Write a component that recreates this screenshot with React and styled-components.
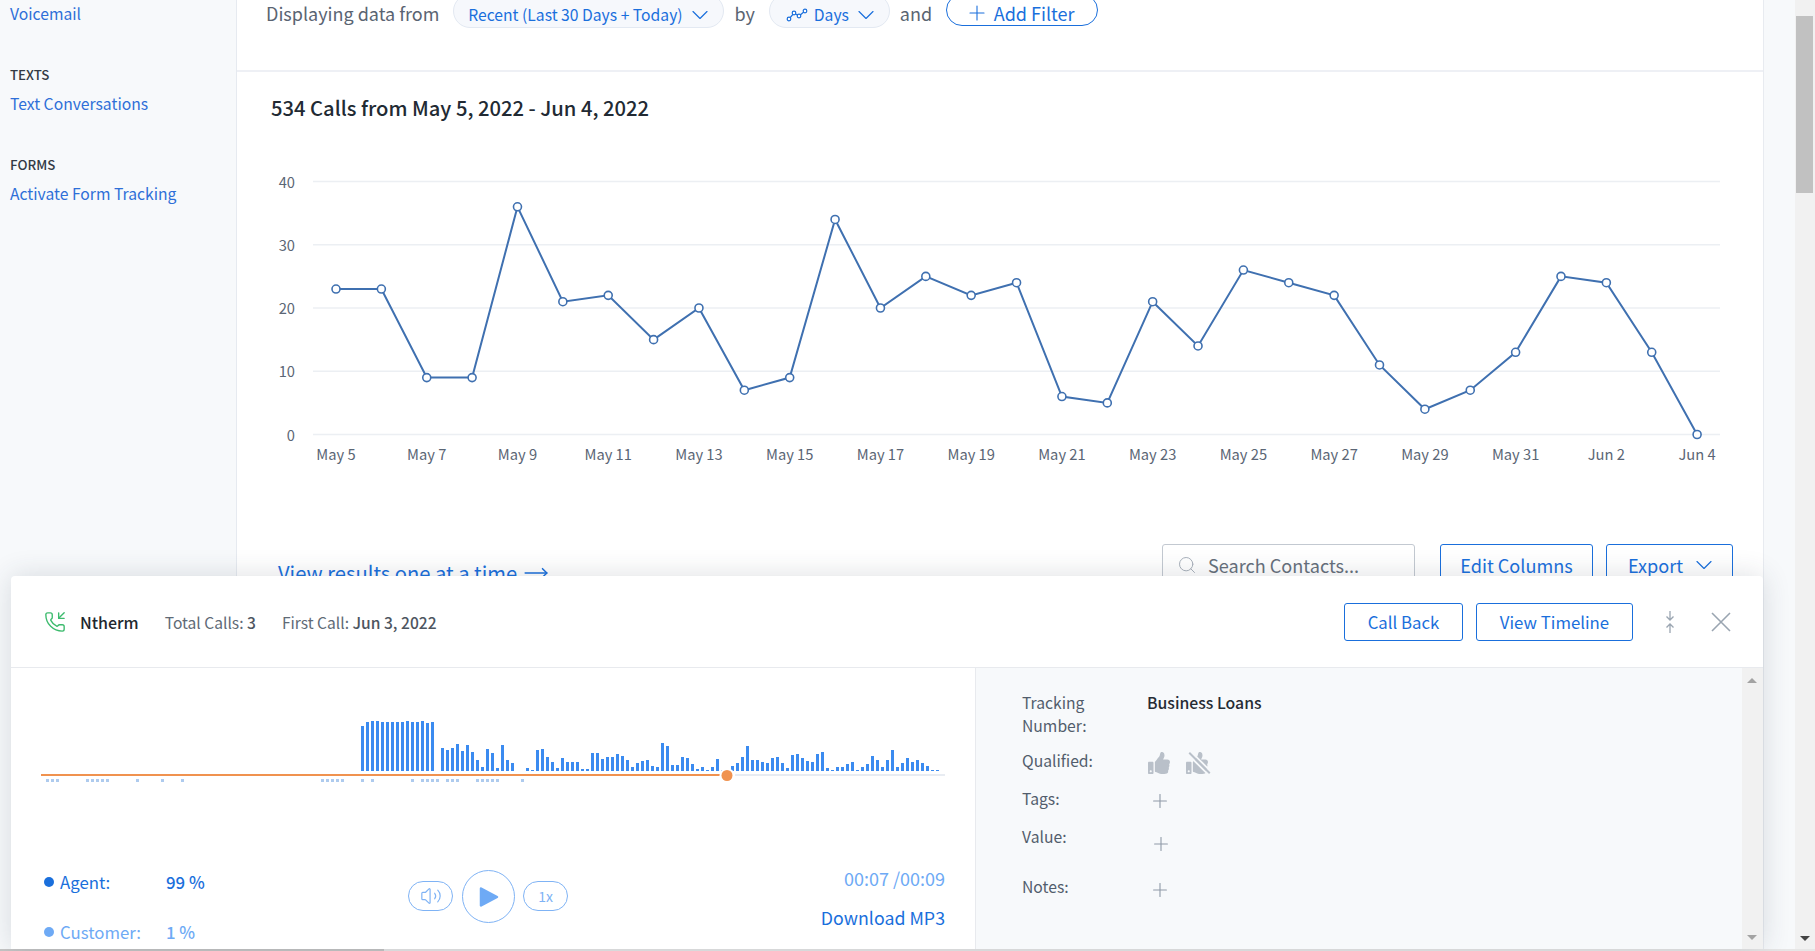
import styled, { createGlobalStyle } from "styled-components";
import { ChevronDown, Plus, Search, PhoneIncoming, Volume2, MoveRight } from "lucide-react";
import { FaThumbsUp } from "react-icons/fa";

const FONT = `"Noto Sans CJK SC", "Noto Sans", sans-serif`;

const CALLS = [23, 23, 9, 9, 36, 21, 22, 15, 20, 7, 9, 34, 20, 25, 22, 24, 6, 5, 21, 14, 26, 24, 22, 11, 4, 7, 13, 25, 24, 13, 0];
const DATE_LABELS = ["May 5", "May 7", "May 9", "May 11", "May 13", "May 15", "May 17", "May 19", "May 21", "May 23", "May 25", "May 27", "May 29", "May 31", "Jun 2", "Jun 4"];
const BARS = [
  45, 49, 50, 50, 49, 49, 49, 49, 49, 50, 49, 49, 50, 48, 49, 0,
  23, 21, 23, 27, 20, 26, 19, 11, 4, 22, 18, 3, 26, 11, 8, 0, 0, 3, 1, 21, 22, 14, 9, 3, 13, 9, 9, 9, 2, 2,
  18, 18, 12, 14, 14, 17, 15, 11, 4, 8, 10, 11, 5, 4, 28, 25, 6, 6, 14, 13, 7, 2, 4, 1, 4, 12, 1, 0,
  5, 8, 14, 25, 11, 11, 9, 8, 13, 14, 8, 3, 16, 17, 13, 10, 9, 17, 19, 3, 1, 4, 4, 7, 9, 1, 4, 7, 15, 11, 4, 11, 21,
  4, 8, 13, 9, 11, 8, 5, 1, 1,
];
const DOTS = [46, 51, 56, 86, 91, 96, 101, 106, 136, 161, 181, 321, 326, 331, 336, 341, 361, 371, 411, 421, 426, 431, 436, 446, 451, 456, 476, 481, 486, 491, 496, 521];

const chartX = (i) => 99 + i * 45.37;
const chartY = (v) => 272.5 - v * 6.325;

const GlobalStyle = createGlobalStyle`
  html, body { margin: 0; padding: 0; overflow: hidden; }
  body { font-family: ${FONT}; background: #fff; }
`;

function CallsChart() {
  return (
    <ChartSvg width="1526" height="340" viewBox="0 0 1526 340">
      {[0, 10, 20, 30, 40].map((v) => (
        <g key={v}>
          <line x1="76" x2="1483" y1={chartY(v)} y2={chartY(v)} stroke="#eceff3" strokeWidth="1.5" />
          <text x="58" y={chartY(v) + 6} textAnchor="end" fontSize="14.7" fill="#5b6675">{v}</text>
        </g>
      ))}
      <polyline
        points={CALLS.map((v, i) => `${chartX(i)},${chartY(v)}`).join(" ")}
        fill="none"
        stroke="#3f70b0"
        strokeWidth="2"
      />
      {CALLS.map((v, i) => (
        <circle key={i} cx={chartX(i)} cy={chartY(v)} r="4" fill="#fff" stroke="#3f70b0" strokeWidth="1.6" />
      ))}
      {DATE_LABELS.map((label, i) => (
        <text key={label} x={chartX(i * 2)} y="298" textAnchor="middle" fontSize="14.7" fill="#5b6675">{label}</text>
      ))}
    </ChartSvg>
  );
}

function Waveform() {
  return (
    <WaveSvg width="964" height="100" viewBox="0 0 964 100">
      {BARS.map((h, i) => (h ? <rect key={i} x={350 + i * 5} y={71 - h} width="3" height={h} fill="#3b8bf0" /> : null))}
      <rect x="30" y="74" width="679" height="2" fill="#f0924f" />
      <rect x="724" y="74" width="210" height="2" fill="#e8ecf2" />
      {DOTS.map((x) => (
        <rect key={x} x={x - 11} y="79" width="3" height="3" fill="#aecbee" />
      ))}
      <circle cx="716" cy="75.5" r="7.5" fill="#fff" />
      <circle cx="716" cy="75.5" r="5.5" fill="#f0924f" />
    </WaveSvg>
  );
}

export default function App() {
  return (
    <>
      <GlobalStyle />
      <Page>
        <Columns>
          <Sidebar>
            <SideLink>Voicemail</SideLink>
            <SideHeading>Texts</SideHeading>
            <SideLink>Text Conversations</SideLink>
            <SideHeading>Forms</SideHeading>
            <SideLink>Activate Form Tracking</SideLink>
          </Sidebar>

          <Main>
            <FilterBar>
              <FilterText>Displaying data from</FilterText>
              <Pill $width={271}>
                Recent (Last 30 Days + Today)
                <Chevron />
              </Pill>
              <FilterText>by</FilterText>
              <Pill $width={121}>
                <svg width="22" height="14" viewBox="0 0 22 14" fill="none" stroke="#1a6fdc" strokeWidth="1.2">
                  <polyline points="3,11 8,5 13,8 19,3" />
                  <circle cx="3" cy="11" r="1.8" fill="#fff" />
                  <circle cx="8" cy="5" r="1.8" fill="#fff" />
                  <circle cx="13" cy="8" r="1.8" fill="#fff" />
                  <circle cx="19" cy="3" r="1.8" fill="#fff" />
                </svg>
                Days
                <Chevron />
              </Pill>
              <FilterText>and</FilterText>
              <AddFilter>
                <Plus size={24} strokeWidth={1.1} />
                Add Filter
              </AddFilter>
            </FilterBar>

            <ChartTitle>534 Calls from May 5, 2022 - Jun 4, 2022</ChartTitle>
            <CallsChart />

            <TableBar>
              <ResultsLink>
                View results one at a time
                <MoveRight size={26} strokeWidth={1.4} />
              </ResultsLink>
              <SearchBox>
                <Search size={20} strokeWidth={1.2} color="#a9b1bb" />
                Search Contacts...
              </SearchBox>
              <OutlineButton $width={153} $height={42}>Edit Columns</OutlineButton>
              <OutlineButton $width={127} $height={42}>
                Export
                <Chevron />
              </OutlineButton>
            </TableBar>
          </Main>

          <Gutter />

          <PageScrollbar>
            <PageThumb />
            <PageArrow />
          </PageScrollbar>
        </Columns>

        <BottomTrack>
          <BottomThumb />
        </BottomTrack>

        <CallPanel>
          <PanelHeader>
            <PhoneIncoming size={22} strokeWidth={1.5} color="#3dbb6e" />
            <CallerName>Ntherm</CallerName>
            <Meta>Total Calls: <b>3</b></Meta>
            <Meta>First Call: <b>Jun 3, 2022</b></Meta>
            <HeaderActions>
              <OutlineButton $width={119} $height={38} $size={16.8}>Call Back</OutlineButton>
              <OutlineButton $width={157} $height={38} $size={16.8}>View Timeline</OutlineButton>
              <CompressIcon width="12" height="24" viewBox="0 0 12 24" fill="none" stroke="#9aa5b1" strokeWidth="1.3">
                <path d="M6 1v9M2.5 6.5L6 10l3.5-3.5M6 23v-9M2.5 17.5L6 14l3.5 3.5" />
              </CompressIcon>
              <CloseIcon width="20" height="20" viewBox="0 0 20 20" fill="none" stroke="#9aa5b1" strokeWidth="1.6">
                <path d="M1 1l18 18M19 1L1 19" />
              </CloseIcon>
            </HeaderActions>
          </PanelHeader>

          <PanelBody>
            <PlayerPane>
              <Waveform />
              <PlayerRow>
                <Stats>
                  <StatRow $color="#1a6fdc">
                    <StatDot $color="#1a6fdc" />
                    <StatLabel>Agent:</StatLabel>
                    <StatValue>99 %</StatValue>
                  </StatRow>
                  <StatRow $color="#6eaaf5">
                    <StatDot $color="#6eaaf5" />
                    <StatLabel>Customer:</StatLabel>
                    <StatValue>1 %</StatValue>
                  </StatRow>
                </Stats>
                <Controls>
                  <RoundPill>
                    <Volume2 size={22} strokeWidth={1.3} />
                  </RoundPill>
                  <PlayButton>
                    <svg width="20" height="22" viewBox="0 0 20 22">
                      <path d="M2 2.5 L18 11 L2 19.5 Z" fill="#6eaaf5" stroke="#6eaaf5" strokeWidth="2.5" strokeLinejoin="round" />
                    </svg>
                  </PlayButton>
                  <RoundPill>1x</RoundPill>
                </Controls>
                <TimeColumn>
                  <TimeText>00:07 /00:09</TimeText>
                  <DownloadLink>Download MP3</DownloadLink>
                </TimeColumn>
              </PlayerRow>
            </PlayerPane>

            <DetailsPane>
              <DetailRow $height={58}>
                <DetailLabel>Tracking Number:</DetailLabel>
                <DetailValue>Business Loans</DetailValue>
              </DetailRow>
              <DetailRow $height={38}>
                <DetailLabel>Qualified:</DetailLabel>
                <ThumbGroup>
                  <FaThumbsUp size={22} color="#b9c0c9" />
                  <SlashedThumb>
                    <FaThumbsUp size={22} color="#b9c0c9" />
                  </SlashedThumb>
                </ThumbGroup>
              </DetailRow>
              <DetailRow $height={38}>
                <DetailLabel>Tags:</DetailLabel>
                <AddIcon $top={3}><Plus size={22} strokeWidth={1.2} /></AddIcon>
              </DetailRow>
              <DetailRow $height={50}>
                <DetailLabel>Value:</DetailLabel>
                <AddIcon $top={8} $left={3}><Plus size={22} strokeWidth={1.2} /></AddIcon>
              </DetailRow>
              <DetailRow $height={40}>
                <DetailLabel>Notes:</DetailLabel>
                <AddIcon $top={4}><Plus size={22} strokeWidth={1.2} /></AddIcon>
              </DetailRow>
            </DetailsPane>

            <PanelScrollbar>
              <ArrowUp />
              <ArrowDown />
            </PanelScrollbar>
          </PanelBody>
        </CallPanel>
      </Page>
    </>
  );
}

const Page = styled.div`
  position: relative;
  width: 1815px;
  height: 951px;
  overflow: hidden;
  display: flex;
  flex-direction: column;
`;

const Columns = styled.div`
  display: flex;
  height: 949px;
`;

const Sidebar = styled.aside`
  width: 237px;
  flex-shrink: 0;
  box-sizing: border-box;
  padding: 2px 0 0 10px;
  background: #f7f9fb;
  border-right: 1px solid #e6eaf0;
`;

const SideLink = styled.div`
  font-size: 15.7px;
  line-height: 24px;
  color: #2e6fd8;
`;

const SideHeading = styled.div`
  margin-top: 37px;
  margin-bottom: 5px;
  font-size: 13.3px;
  line-height: 24px;
  font-weight: 500;
  text-transform: uppercase;
  color: #333a44;
`;

const Main = styled.main`
  width: 1526px;
  flex-shrink: 0;
  background: #fff;
`;

const FilterBar = styled.div`
  display: flex;
  align-items: flex-start;
  height: 70px;
  margin-top: -6px;
  padding: 0 0 6px 29px;
  border-bottom: 2px solid #eef0f5;
`;

const FilterText = styled.span`
  margin-top: 6px;
  margin-right: 14px;
  font-size: 18px;
  line-height: 26px;
  color: #5a6472;
`;

const Pill = styled.div`
  box-sizing: border-box;
  width: ${(p) => p.$width}px;
  height: 34px;
  margin-right: 10px;
  padding-top: 7px;
  display: flex;
  align-items: center;
  justify-content: center;
  gap: 10px;
  border: 1px solid #e3e9f2;
  border-radius: 17px;
  background: #f6f8fc;
  font-size: 15.7px;
  color: #1a6fdc;
  & > svg:first-child { margin-right: -4px; }
`;

const Chevron = styled(ChevronDown).attrs({ size: 28, strokeWidth: 1 })`
  margin: -7px;
  flex-shrink: 0;
`;

const AddFilter = styled.div`
  box-sizing: border-box;
  width: 152px;
  height: 32px;
  padding: 6px 5px 0 0;
  display: flex;
  align-items: center;
  justify-content: center;
  gap: 5px;
  border: 1px solid #1a6fdc;
  border-radius: 16px;
  font-size: 18px;
  color: #1a6fdc;
`;

const ChartTitle = styled.h2`
  margin: 23px 0 0 34px;
  font-size: 20.2px;
  line-height: 26px;
  font-weight: 500;
  color: #222a33;
`;

const ChartSvg = styled.svg`
  display: block;
  margin-top: 41px;
  font-family: ${FONT};
`;

const TableBar = styled.div`
  display: flex;
  align-items: flex-start;
  margin-top: 42px;
  padding: 0 30px 0 41px;
`;

const ResultsLink = styled.div`
  display: flex;
  align-items: center;
  gap: 6px;
  margin-top: 15px;
  margin-right: auto;
  font-size: 20.2px;
  line-height: 28px;
  color: #1a6fdc;
`;

const SearchBox = styled.div`
  box-sizing: border-box;
  width: 253px;
  height: 42px;
  margin-right: 25px;
  padding: 0 14px;
  display: flex;
  align-items: center;
  gap: 11px;
  border: 1px solid #c3c9d1;
  border-radius: 3px;
  font-size: 18.1px;
  color: #67707c;
`;

const OutlineButton = styled.button`
  box-sizing: border-box;
  width: ${(p) => p.$width}px;
  height: ${(p) => p.$height}px;
  padding: 0;
  display: flex;
  align-items: center;
  justify-content: center;
  gap: 14px;
  border: 1px solid #1a6fdc;
  border-radius: 3px;
  background: #fff;
  font-family: ${FONT};
  font-size: ${(p) => p.$size || 18.1}px;
  color: #1a6fdc;
  & + & { margin-left: 13px; }
`;

const Gutter = styled.div`
  width: 32px;
  flex-shrink: 0;
  box-sizing: border-box;
  background: #f7f9fb;
  border-left: 1px solid #e8ebf0;
`;

const PageScrollbar = styled.div`
  position: relative;
  width: 20px;
  flex-shrink: 0;
  background: #f1f1f1;
`;

const PageThumb = styled.div`
  width: 17px;
  height: 177px;
  margin: 16px 0 0 1px;
  background: #c1c1c1;
`;

const PageArrow = styled.div`
  position: absolute;
  left: 5px;
  bottom: 8px;
  border-left: 5px solid transparent;
  border-right: 5px solid transparent;
  border-top: 5px solid #444;
`;

const BottomTrack = styled.div`
  height: 2px;
  background: #e6e6e6;
`;

const BottomThumb = styled.div`
  width: 384px;
  height: 2px;
  background: #c4c4c4;
`;

const CallPanel = styled.section`
  position: absolute;
  left: 11px;
  top: 576px;
  width: 1752px;
  height: 373px;
  display: flex;
  flex-direction: column;
  background: #fff;
  border-radius: 4px 4px 0 0;
  box-shadow: 0 0 28px rgba(45, 55, 75, 0.16);
`;

const PanelHeader = styled.header`
  box-sizing: border-box;
  height: 92px;
  flex-shrink: 0;
  padding: 0 32px 0 33px;
  display: flex;
  align-items: center;
  border-bottom: 1px solid #e8eaee;
`;

const CallerName = styled.span`
  margin-left: 14px;
  margin-right: 26px;
  font-size: 16px;
  font-weight: 500;
  color: #22272e;
`;

const Meta = styled.span`
  margin-right: 26px;
  font-size: 15.6px;
  color: #606a76;
  b { font-weight: 500; color: #4d5560; }
`;

const HeaderActions = styled.div`
  margin-left: auto;
  display: flex;
  align-items: center;
`;

const CompressIcon = styled.svg`
  margin-left: 31px;
`;

const CloseIcon = styled.svg`
  margin-left: 35px;
`;

const PanelBody = styled.div`
  flex: 1;
  min-height: 0;
  display: flex;
`;

const PlayerPane = styled.div`
  width: 964px;
  flex-shrink: 0;
  background: #fff;
  border-right: 1px solid #e8eaee;
`;

const WaveSvg = styled.svg`
  display: block;
  margin-top: 32px;
`;

const PlayerRow = styled.div`
  display: flex;
  align-items: flex-start;
  margin-top: 65px;
  padding: 0 30px 0 33px;
`;

const Stats = styled.div`
  width: 364px;
  padding-top: 5px;
  display: flex;
  flex-direction: column;
  gap: 26px;
`;

const StatRow = styled.div`
  display: flex;
  align-items: center;
  font-size: 16.8px;
  line-height: 24px;
  color: ${(p) => p.$color};
`;

const StatDot = styled.span`
  width: 10px;
  height: 10px;
  margin-right: 6px;
  border-radius: 50%;
  background: ${(p) => p.$color};
`;

const StatLabel = styled.span`
  width: 106px;
`;

const StatValue = styled.span`
  font-weight: 500;
`;

const Controls = styled.div`
  display: flex;
  align-items: center;
  gap: 9px;
  padding-top: 5px;
`;

const RoundPill = styled.div`
  box-sizing: border-box;
  width: 45px;
  height: 30px;
  margin-bottom: 2px;
  display: flex;
  align-items: center;
  justify-content: center;
  border: 1px solid #7fb3f5;
  border-radius: 15px;
  font-size: 14px;
  color: #7fb3f5;
`;

const PlayButton = styled.div`
  box-sizing: border-box;
  width: 53px;
  height: 53px;
  margin-right: -1px;
  display: flex;
  align-items: center;
  justify-content: center;
  border: 1px solid #7fb3f5;
  border-radius: 50%;
`;

const TimeColumn = styled.div`
  margin-left: auto;
  padding-top: 1px;
  display: flex;
  flex-direction: column;
  align-items: flex-end;
  gap: 15px;
`;

const TimeText = styled.div`
  font-size: 18px;
  line-height: 24px;
  color: #6eaaf5;
`;

const DownloadLink = styled.div`
  font-size: 17.8px;
  line-height: 24px;
  color: #1a6fdc;
`;

const DetailsPane = styled.div`
  flex: 1;
  padding: 23px 0 0 46px;
  background: #f7f9fb;
`;

const DetailRow = styled.div`
  display: grid;
  grid-template-columns: 125px 1fr;
  height: ${(p) => p.$height}px;
`;

const DetailLabel = styled.div`
  max-width: 90px;
  font-size: 15.7px;
  line-height: 23px;
  color: #525d6c;
`;

const DetailValue = styled.div`
  font-size: 15.8px;
  line-height: 23px;
  font-weight: 500;
  color: #262c34;
`;

const ThumbGroup = styled.div`
  display: flex;
  gap: 16px;
  margin-top: 3px;
  padding-left: 1px;
`;

const SlashedThumb = styled.span`
  position: relative;
  display: block;
  height: 22px;
  &::after {
    content: "";
    position: absolute;
    left: -1px;
    top: 10px;
    width: 29px;
    height: 2px;
    background: #b9c0c9;
    box-shadow: 0 -2px 0 #f7f9fb, 0 2px 0 #f7f9fb;
    transform: rotate(45deg);
  }
`;

const AddIcon = styled.div`
  margin-top: ${(p) => p.$top}px;
  margin-left: ${(p) => p.$left || 2}px;
  color: #8f9aa8;
`;

const PanelScrollbar = styled.div`
  position: relative;
  width: 21px;
  flex-shrink: 0;
  background: #f1f1f1;
`;

const ArrowUp = styled.div`
  position: absolute;
  left: 5px;
  top: 10px;
  border-left: 5px solid transparent;
  border-right: 5px solid transparent;
  border-bottom: 5px solid #a3a3a3;
`;

const ArrowDown = styled.div`
  position: absolute;
  left: 5px;
  bottom: 9px;
  border-left: 5px solid transparent;
  border-right: 5px solid transparent;
  border-top: 5px solid #a3a3a3;
`;
